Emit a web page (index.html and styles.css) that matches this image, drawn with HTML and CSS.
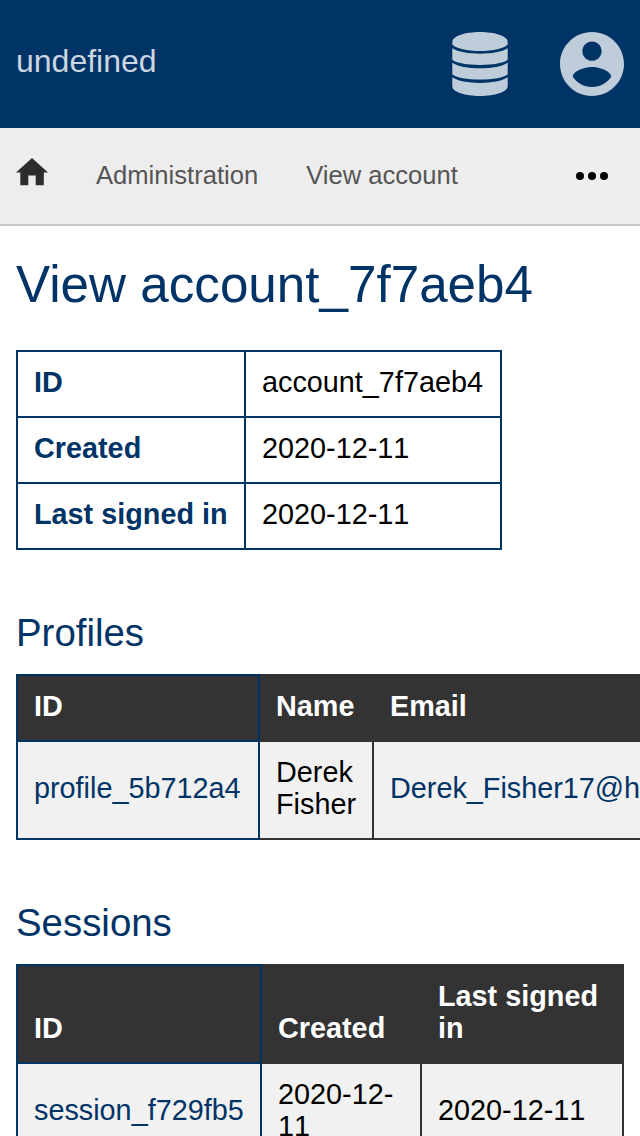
FILE: index.html
```html
<!DOCTYPE html>
<html lang="en">
<head>
<meta charset="utf-8">
<title>View account</title>
<link rel="stylesheet" href="styles.css">
</head>
<body>
<header class="header">
  <a class="brand">undefined</a>
  <div class="tools">
    <svg class="icon-db" viewBox="0 0 56 64"><path d="M.3 10C.3 4 13 0 28 0s27.700 4 27.700 10v2.500C52 16.500 41 19 28 19S4 16.500.3 12.500z"/><path d="M.3 16.300C6 20 16 21.700 28 21.700s22-1.700 27.700-5.400v11.500C52 31 41 33 28 33S4 31 .3 27.800z"/><path d="M.3 30.700C6 34.500 16 36.300 28 36.300s22-1.800 27.700-5.600v11.500C52 45.500 41 47.500 28 47.500S4 45.500.3 42.200z"/><path d="M.3 45.300C6 49 16 50.900 28 50.900s22-1.900 27.700-5.600v9C55.700 60 43 64 28 64S.3 60 .3 54.300z"/></svg>
    <svg class="icon-user" viewBox="2 2 20 20"><path d="M12 2C6.480 2 2 6.480 2 12s4.480 10 10 10 10-4.480 10-10S17.520 2 12 2zm0 3c1.660 0 3 1.340 3 3s-1.340 3-3 3-3-1.340-3-3 1.340-3 3-3zm0 14.200c-2.500 0-4.710-1.280-6-3.220.03-1.990 4-3.080 6-3.080 1.990 0 5.970 1.090 6 3.080-1.290 1.940-3.500 3.220-6 3.220z"/></svg>
  </div>
</header>
<nav class="crumbs">
  <svg class="icon-home" viewBox="2 3 20 17"><path d="M9.700 20v-6h4.600v6h5.100v-8H22L12 3 2 12h2.700v8z"/></svg>
  <a>Administration</a>
  <a>View account</a>
  <svg class="icon-more" viewBox="0 0 32 8"><circle cx="4" cy="4" r="4"/><circle cx="16" cy="4" r="4"/><circle cx="28" cy="4" r="4"/></svg>
</nav>
<main class="content">
  <h1>View account_7f7aeb4</h1>
  <table class="details">
    <colgroup><col class="d1"><col class="d2"></colgroup>
    <tr><th>ID</th><td>account_7f7aeb4</td></tr>
    <tr><th>Created</th><td>2020-12-11</td></tr>
    <tr><th>Last signed in</th><td>2020-12-11</td></tr>
  </table>
  <h2>Profiles</h2>
  <table class="list profiles">
    <colgroup><col class="p1"><col class="p2"><col class="p3"></colgroup>
    <thead><tr><th class="key">ID</th><th>Name</th><th>Email</th></tr></thead>
    <tbody><tr><td class="key"><a>profile_5b712a4</a></td><td>Derek Fisher</td><td><a>Derek_Fisher17@h</a></td></tr></tbody>
  </table>
  <h2>Sessions</h2>
  <table class="list sessions">
    <colgroup><col class="s1"><col class="s2"><col class="s3"></colgroup>
    <thead><tr><th class="key">ID</th><th>Created</th><th>Last signed in</th></tr></thead>
    <tbody><tr><td class="key"><a>session_f729fb5</a></td><td>2020-12-11</td><td>2020-12-11</td></tr></tbody>
  </table>
</main>
</body>
</html>
```
FILE: styles.css
```css
* { box-sizing: border-box; }
html { height: 1136px; overflow: hidden; }
body {
  margin: 0;
  height: 1136px;
  overflow: hidden;
  background: #fff;
  color: #000;
  font-family: "Liberation Sans", Arial, sans-serif;
}
svg { display: block; flex: none; }
.header {
  display: flex;
  align-items: center;
  justify-content: space-between;
  height: 128px;
  padding: 0 16px;
  background: #003366;
}
.brand {
  font-size: 32px;
  line-height: 36px;
  padding-bottom: 6px;
  color: #ccd6e0;
}
.tools { display: flex; gap: 52px; fill: #bfccd9; }
.icon-db { width: 56px; height: 64px; }
.icon-user { width: 64px; height: 64px; }
.crumbs {
  display: flex;
  align-items: center;
  gap: 48px;
  height: 98px;
  padding: 0 32px 0 16px;
  background: #ededed;
  border-bottom: 2px solid #c8c8c8;
  color: #555;
  font-size: 25.6px;
  line-height: 30px;
}
.crumbs a { padding-bottom: 2px; }
.icon-home { width: 32px; height: 27.2px; margin-bottom: 8px; fill: #2d2d2d; }
.icon-more { width: 32px; height: 8px; margin-left: auto; fill: #000; }
.content { width: 816px; padding: 31px 16px 0; }
h1, h2 { color: #003366; font-weight: 400; }
h1 { margin: 0 0 37px; font-size: 51.2px; line-height: 56px; }
h2 { margin: 62px 0 20px; font-size: 38.4px; line-height: 42px; }
table {
  border-collapse: collapse;
  table-layout: fixed;
  font-size: 28.8px;
  line-height: 32px;
  font-kerning: none;
}
th, td { padding: 14px 16px 18px; text-align: left; }
.details { width: 486px; }
.details th, .details td { border: 2px solid #003366; }
.details th { color: #003366; }
.d1 { width: 228px; }
.d2 { width: 256px; }
.list th, .list td { border: 2px solid #333; }
.list th { background: #333; color: #fff; vertical-align: bottom; }
.list td { background: #f1f1f1; }
.list .key { border-color: #003366; }
.list a { color: #003366; }
.profiles { width: 784px; }
.p1 { width: 242px; }
.p2 { width: 114px; }
.p3 { width: 426px; }
.sessions { width: 608px; }
.s1 { width: 244px; }
.s2 { width: 160px; }
.s3 { width: 202px; }
```
